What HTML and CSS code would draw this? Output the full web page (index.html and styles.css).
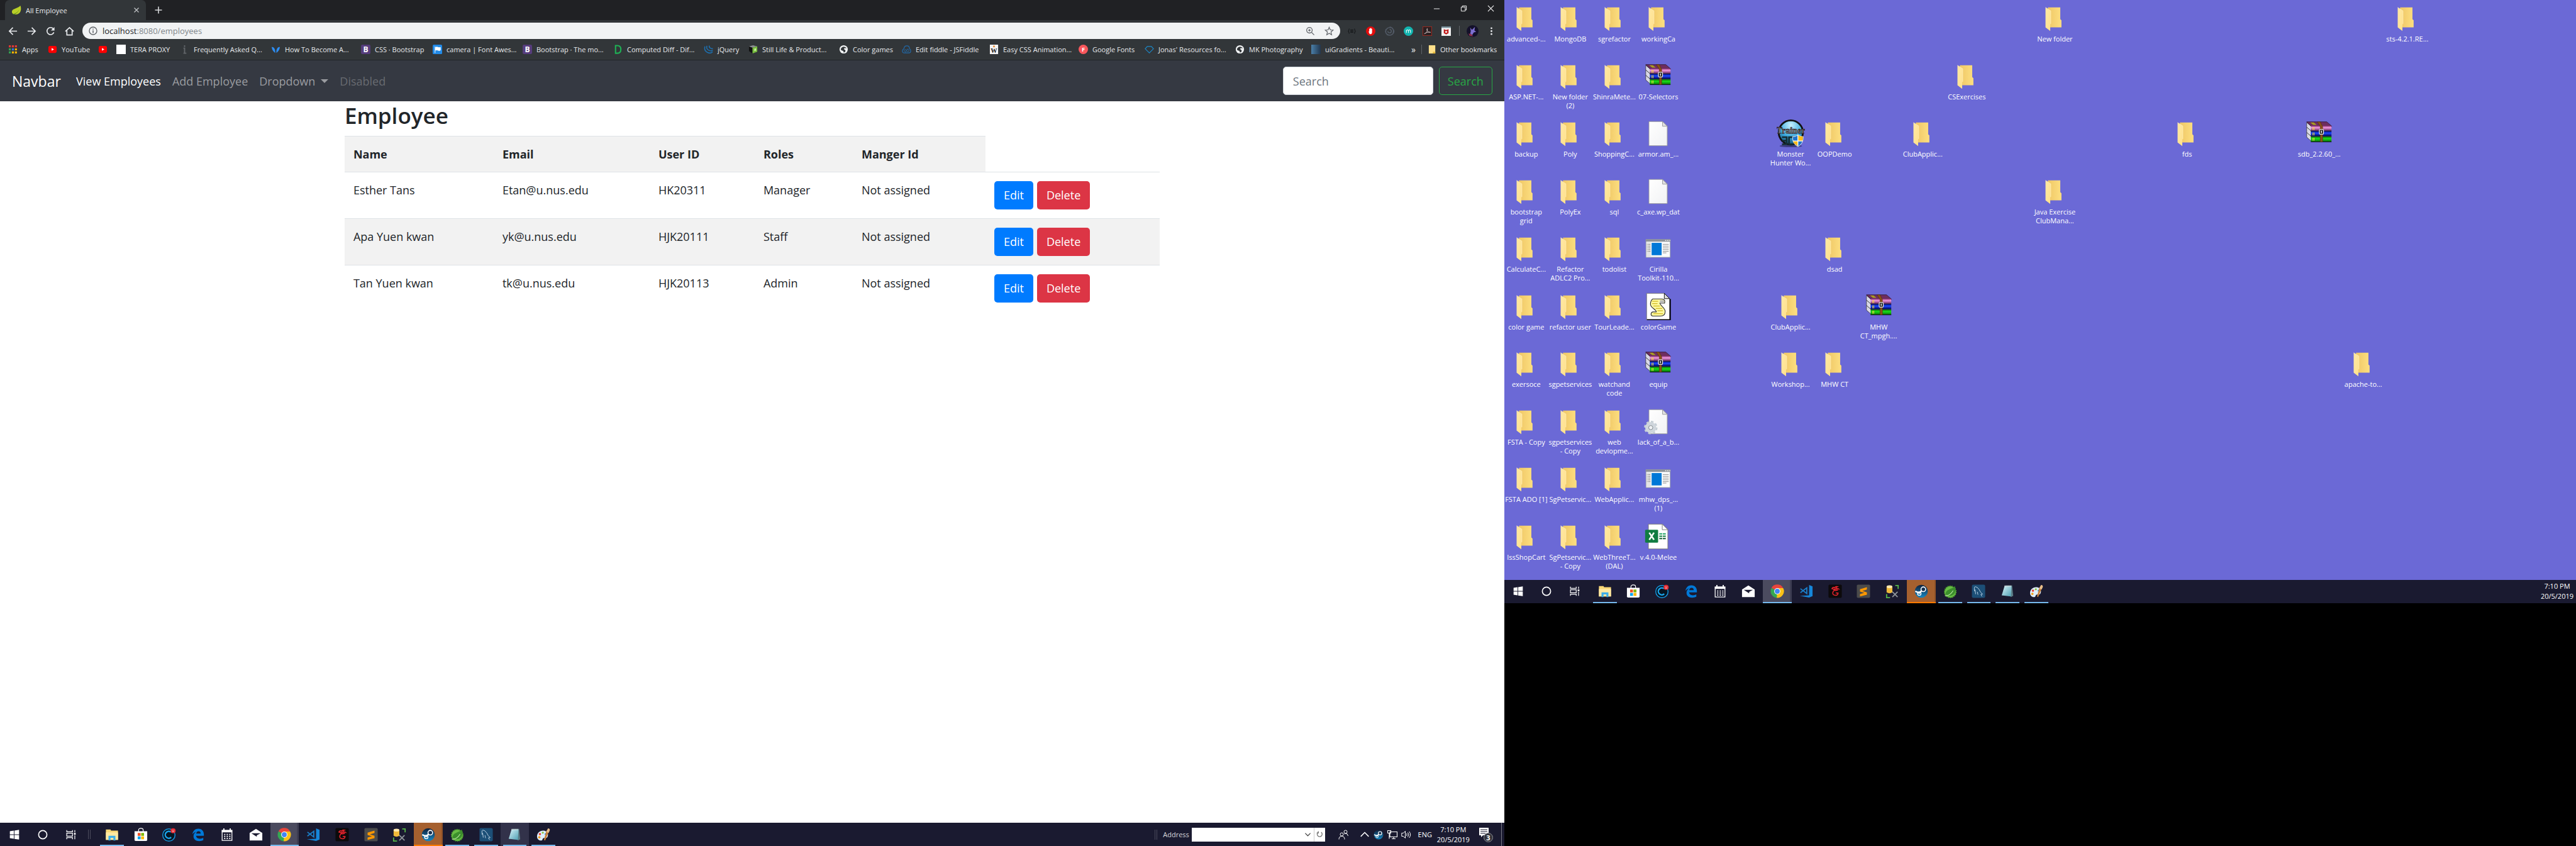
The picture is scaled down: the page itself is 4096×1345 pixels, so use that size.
FILE: index.html
```html
<!DOCTYPE html>
<html lang="en">
<head>
<meta charset="utf-8">
<title>All Employee</title>
<link rel="stylesheet" href="styles.css">
</head>
<body>
<svg class="sprite" width="0" height="0" aria-hidden="true">
  <defs>
    <linearGradient id="gFlap" x1="0" y1="0" x2="1" y2="1"><stop offset="0" stop-color="#ffe9a6"/><stop offset="1" stop-color="#ffe08a"/></linearGradient>
    <linearGradient id="gBack" x1="0" y1="0" x2="1" y2="0"><stop offset="0" stop-color="#efc766"/><stop offset="1" stop-color="#fddf80"/></linearGradient>
    <linearGradient id="gPink" x1="0" y1="0" x2="0" y2="1"><stop offset="0" stop-color="#a0408c"/><stop offset=".35" stop-color="#f09be0"/><stop offset="1" stop-color="#6d2560"/></linearGradient>
    <linearGradient id="gBlue" x1="0" y1="0" x2="0" y2="1"><stop offset="0" stop-color="#000c8c"/><stop offset=".4" stop-color="#1c48ff"/><stop offset="1" stop-color="#000a60"/></linearGradient>
    <linearGradient id="gGreen" x1="0" y1="0" x2="0" y2="1"><stop offset="0" stop-color="#0a7d0a"/><stop offset=".4" stop-color="#19dd19"/><stop offset="1" stop-color="#066006"/></linearGradient>
    <linearGradient id="gPage" x1="0" y1="0" x2="1" y2="1"><stop offset="0" stop-color="#ffffff"/><stop offset="1" stop-color="#f1f2f4"/></linearGradient>
    <radialGradient id="gOrb" cx=".5" cy=".2" r=".8"><stop offset="0" stop-color="#c8f1ff"/><stop offset=".6" stop-color="#3aa9dd"/><stop offset="1" stop-color="#125079"/></radialGradient>
    <linearGradient id="gSteam" x1="0" y1="0" x2="0" y2="1"><stop offset="0" stop-color="#10203a"/><stop offset="1" stop-color="#1789c4"/></linearGradient>
    <linearGradient id="gNote" x1="0" y1="0" x2="1" y2="1"><stop offset="0" stop-color="#d6f3f8"/><stop offset="1" stop-color="#4fa0b4"/></linearGradient>
    <linearGradient id="gUi" x1="0" y1="0" x2="1" y2="0"><stop offset="0" stop-color="#4a7fa8"/><stop offset="1" stop-color="#22374f"/></linearGradient>
  </defs>

  <symbol id="folder" viewBox="0 0 48 48">
    <path d="M12 6h21v20l2 2v12H12z" fill="url(#gBack)"/>
    <path d="M8 6l9 6v22l-1 1v11l-8-6z" fill="url(#gFlap)"/>
    <path d="M8 6l9 6v22" fill="none" stroke="#fff3c8" stroke-width=".6"/>
  </symbol>
  <symbol id="rar" viewBox="0 0 48 48">
    <path d="M3 6l8 7v25l-8-7z" fill="#d9d9e6" stroke="#333" stroke-width=".8"/>
    <path d="M3 14l8 7M3 23l8 7" stroke="#333" stroke-width="1"/>
    <path d="M3 5h34l8 7v1H11z" fill="#6e2d5f" stroke="#2b1326" stroke-width=".8"/>
    <path d="M9 6h6l5 4h-6z" fill="#a8a020"/>
    <rect x="10" y="12" width="35" height="8" fill="url(#gPink)"/>
    <rect x="10" y="21" width="35" height="8" fill="url(#gBlue)"/>
    <rect x="10" y="30" width="35" height="9" fill="url(#gGreen)"/>
    <path d="M10 20.500h35M10 29.500h35M10 39h35" stroke="#101018"/>
    <path d="M13.500 14v5M15.500 14v5M13.500 23v5M15.500 23v5M13.500 32v5M15.500 32v5" stroke="#ffe33a"/>
    <path d="M21 5h5l4 8v26h-4V13z" fill="#8a5118" stroke="#4f2c08" stroke-width=".6"/>
    <rect x="24.500" y="18" width="7" height="8" rx="1.500" fill="#222" stroke="#e0e0e0" stroke-width="1.400"/>
    <path d="M28 20v4" stroke="#fff" stroke-width="1.400"/>
  </symbol>
  <symbol id="page" viewBox="0 0 48 48">
    <path d="M8.500 4.500h23l8 8v33h-31z" fill="url(#gPage)" stroke="#9a9a9a"/>
    <path d="M31.500 4.500v8h8z" fill="#e3e3e3" stroke="#9a9a9a"/>
  </symbol>
  <symbol id="app" viewBox="0 0 48 48">
    <rect x="3.500" y="9.500" width="41" height="30" fill="#fbfbfb" stroke="#9aa0a8"/>
    <path d="M3 9h42v4H3z" fill="#8d9299"/>
    <path d="M36 11h2M39.500 11h2M43 11h1.500" stroke="#fff" stroke-width="1.400"/>
    <path d="M4 13h8v26H4z" fill="#e4e4e4"/>
    <path d="M5 17.500h1M7 17.500h4M5 20.500h1M7 20.500h4M5 23.500h1M7 23.500h4M5 26.500h1M7 26.500h4M5 29.500h1M7 29.500h4M32 17.500h10M32 20.500h10M32 23.500h10M32 26.500h10M32 29.500h10M32 32h6" stroke="#8a8a8a"/>
    <path d="M13 15h17v21H13z" fill="#0078d7"/>
  </symbol>
  <symbol id="script" viewBox="0 0 48 48">
    <path d="M4.500 2.500h30l9 9v36h-39z" fill="#fff" stroke="#777"/>
    <path d="M5 47.500h39.500V12" fill="none" stroke="#000" stroke-width="2"/>
    <path d="M34.500 2.500v9h9z" fill="#ddd" stroke="#000"/>
    <path d="M15 12h15c5 0 6 3 5 7h-8c0 4 9 8 9 14 0 5-3 8-8 8H15c-4 0-4-6 0-7h6c0-4-10-7-10-13 0-4 1-7 4-9z" fill="#fdf9a0" stroke="#333" stroke-width="1.200"/>
    <path d="M27 14h7v5h-7z" fill="#bbb"/>
    <path d="M14 16h10M14 20h9M16 24h11M20 28h11M23 32h9M16 37h16" stroke="#c5a800" stroke-width="1.200"/>
  </symbol>
  <symbol id="gear" viewBox="0 0 48 48">
    <use href="#page"/>
    <circle cx="11.500" cy="35" r="9.500" fill="none" stroke="#c3cdd4" stroke-width="4" stroke-dasharray="4 3.460"/>
    <circle cx="11.500" cy="35" r="6.500" fill="none" stroke="#cfd6dc" stroke-width="6"/>
    <circle cx="11.500" cy="35" r="3.500" fill="#f0f2f4" stroke="#7d858c"/>
  </symbol>
  <symbol id="xls" viewBox="0 0 48 48">
    <path d="M7.500 3.500h24l9 9v33h-33z" fill="#fff" stroke="#777"/>
    <path d="M31 3.500v9.500h9.500z" fill="#fff" stroke="#777"/>
    <path d="M26 20h5M32 20h5" stroke="#21a366" stroke-width="2"/>
    <path d="M26 24h5M32 24h5" stroke="#107c41" stroke-width="2"/>
    <path d="M26 28h5M32 28h5" stroke="#185c37" stroke-width="2"/>
    <rect x="2" y="13" width="22" height="22" rx="1.500" fill="#107c41"/>
    <path d="M9 18l8 12M17 18l-8 12" stroke="#fff" stroke-width="2.800"/>
  </symbol>
  <symbol id="trainer" viewBox="0 0 48 48">
    <ellipse cx="24" cy="46" rx="19" ry="2" fill="#3f3d85"/>
    <circle cx="24" cy="23" r="20.500" fill="url(#gOrb)" stroke="#111" stroke-width="3"/>
    <text x="24" y="25" text-anchor="middle" class="ico-cond" font-size="15" fill="#8f8f93" stroke="#33201c" stroke-width=".8">Trainer</text>
    <path d="M9 31h8v12H9M9 37h8M29 31h-8v12h8" fill="none" stroke="#152e35" stroke-width="3"/>
    <path d="M27 30c4 0 7-1 9-3 3 2 6 3 9 3 0 8-2 13-9 17-7-4-9-9-9-17z" fill="#1f74c9" stroke="#eee"/>
    <path d="M36 27.500c3 2 5 2.500 8.500 2.500 0 3 0 5-1 7.500H36zM27.700 37.500H36V46c-5-3-7-5-8.300-8.500z" fill="#fbbc1c"/>
    <path d="M36 27v19M27.500 37.500H44" stroke="#fff" stroke-width="1.400"/>
  </symbol>

  <symbol id="t-win" viewBox="0 0 24 24"><path d="M4 6l7-1v6.500H4zM12 4.800L20 3.500v8h-8zM4 12.500h7V19l-7-1zM12 12.500h8v8l-8-1.200z" fill="#fff"/></symbol>
  <symbol id="t-circle" viewBox="0 0 24 24"><circle cx="12" cy="12" r="7.200" fill="none" stroke="#fff" stroke-width="1.800"/></symbol>
  <symbol id="t-view" viewBox="0 0 24 24"><path d="M4.500 4v3h10V4M4.500 20v-3h10v3M4.500 9.500h10v5h-10zM18.500 4v4M18.500 13v7" fill="none" stroke="#fff" stroke-width="1.300"/><path d="M17 9h3v3h-3z" fill="#fff"/></symbol>
  <symbol id="t-files" viewBox="0 0 24 24"><path d="M1.500 3h8l1 2h12v16h-21z" fill="#f8d775"/><path d="M1.500 8h21v13h-21z" fill="#ffe9a2"/><path d="M6 22v-8h12v8h-3.500v-4.500h-5V22z" fill="#3daee9"/></symbol>
  <symbol id="t-store" viewBox="0 0 24 24"><path d="M8 7V4q0-3 4-3t4 3v3" fill="none" stroke="#fff" stroke-width="1.300"/><path d="M1 6h22v15q0 2-2 2H3q-2 0-2-2z" fill="#fff"/><path d="M6.500 9h5v5h-5z" fill="#f25022"/><path d="M12.500 9h5v5h-5z" fill="#7fba00"/><path d="M6.500 15h5v5h-5z" fill="#00a4ef"/><path d="M12.500 15h5v5h-5z" fill="#ffb900"/></symbol>
  <symbol id="t-cc" viewBox="0 0 24 24"><circle cx="11.500" cy="12.500" r="10.700" fill="#061522" stroke="#1596dd" stroke-width="1.600"/><path d="M15 7.500A6 6 0 1 0 15.500 16.500" fill="none" stroke="#19a3ea" stroke-width="2.600"/><circle cx="18.800" cy="5.200" r="4.400" fill="#e3262e"/><path d="M16.800 4.300h1.400M19.400 4.300h1.400M17 7q1.800-1.400 3.600 0" stroke="#fff" fill="none" stroke-width=".9"/></symbol>
  <symbol id="t-edge" viewBox="0 0 24 24"><path d="M2 11.500C3 5 7 1.500 12.500 1.500c6 0 9.500 4.500 9.500 10V14H8.500c.3 3.500 3 5 6.500 5 2.300 0 4.300-.6 6-1.600v4.200c-2 1-4.500 1.600-7.200 1.600C8 23.200 4 20 4 14.800c0-3.300 1.700-6 4.600-7.600C5.800 7.800 3.400 9.200 2 11.500zm6.700-1.300h7.800c0-2.600-1.300-4.200-3.700-4.200-2.300 0-3.700 1.600-4.100 4.200z" fill="#0078d7"/></symbol>
  <symbol id="t-cal" viewBox="0 0 24 24"><path d="M3.500 4.500h17V22h-17z" fill="none" stroke="#fff" stroke-width="1.400"/><path d="M3 4h18v4H3zM5.500 1h2v4h-2zM16.500 1h2v4h-2z" fill="#fff"/><path d="M7 11.500h11M7 15h11M7 18.500h11" stroke="#fff" stroke-width="2" stroke-dasharray="2 2.400"/></symbol>
  <symbol id="t-mail" viewBox="0 0 24 24"><path d="M1 9L12 2l11 7v13H1z" fill="#fff"/><path d="M4 9.500h16L13.500 13l-.2 2.500z" fill="#1a1a30"/></symbol>
  <symbol id="t-chrome" viewBox="0 0 24 24"><path d="M12 12L2 6.200A11.500 11.500 0 0 1 22 6.200z" fill="#e8453c"/><path d="M12 12L2 6.200A11.500 11.500 0 0 0 11 23.400L17 15z" fill="#34a853"/><path d="M12 12l-1 11.400A11.500 11.500 0 0 0 22.200 6.600L12 6.500z" fill="#fbc116"/><circle cx="12" cy="12" r="5.400" fill="#fff"/><circle cx="12" cy="12" r="4.300" fill="#4285f4"/></symbol>
  <symbol id="t-code" viewBox="0 0 24 24"><path d="M17 1l6 2.500v17L17 23 1 20l16-1z" fill="#1686d9"/><path d="M2 7.500l11 8.500V6L2 14.500" fill="none" stroke="#1b7fc9" stroke-width="2"/></symbol>
  <symbol id="t-garena" viewBox="0 0 24 24"><rect x=".5" y=".5" width="23" height="23" rx="2" fill="#0c0a0b"/><path d="M6 8q2-4 5-2 2-3 5-2-3 1-2 3 3 0 4 1-5-1-8 1-3-2-4-1zM17 10q-8-1-9 4t5 5q4 0 4-4h-4M10 10q4 1 5 0" fill="none" stroke="#e5232c" stroke-width="1.700"/></symbol>
  <symbol id="t-sub" viewBox="0 0 24 24"><rect x=".5" y=".5" width="23" height="23" rx="2" fill="#4b4b4b"/><path d="M18 5v4l-8 2.500 8 2.500v4L6 21v-4l7.500-2.300L6 12.500v-4z" fill="#ff9800"/></symbol>
  <symbol id="t-tools" viewBox="0 0 24 24"><path d="M2 4v10q5 3 10 0V4z" fill="#f0b93a"/><ellipse cx="7" cy="4" rx="5" ry="2.500" fill="#ffe9b0"/><path d="M17 2h5v6M2 17v6h6" fill="none" stroke="#56b648" stroke-width="2"/><path d="M12 13l9 9M21 13l-9 9" stroke="#8e949a" stroke-width="2"/></symbol>
  <symbol id="t-steam" viewBox="0 0 24 24"><circle cx="12" cy="12" r="11.300" fill="url(#gSteam)"/><path d="M1.500 12l7 3 4-4" fill="none" stroke="#fff" stroke-width="2.600"/><circle cx="8.500" cy="16" r="3" fill="none" stroke="#fff" stroke-width="1.500"/><circle cx="15.500" cy="8.500" r="4" fill="#16304f" stroke="#fff" stroke-width="1.700"/></symbol>
  <symbol id="t-leaf" viewBox="0 0 24 24"><circle cx="12" cy="13" r="10" fill="#68bd45" stroke="#4d9a30" stroke-width="2" stroke-dasharray="2 1.500"/><path d="M4 17C4 8 15 9 20 3c3 9 0 17-9 17-3 0-5-1-7-3z" fill="#3c8f2c"/><path d="M3 20q9 0 14-9" fill="none" stroke="#b9e6a0" stroke-width="1.200"/></symbol>
  <symbol id="t-dolphin" viewBox="0 0 24 24"><rect x=".5" y=".5" width="23" height="23" rx="2.500" fill="#1c4f77"/><path d="M5 12q-1-7 1-8 4 0 7 5 2 5 6 8l-3 .5 2 3.500M6 9l1 8M10 13l1 5" fill="none" stroke="#c3d9ea" stroke-width="1"/></symbol>
  <symbol id="t-note" viewBox="0 0 24 24"><path d="M8 2h12l2 18-4 2z" fill="#5b7d86"/><path d="M7 3h12l-1 18-16-2z" fill="url(#gNote)"/><path d="M7 3h12" stroke="#e8e8e8" stroke-width="2" stroke-dasharray="1 1"/></symbol>
  <symbol id="t-paint" viewBox="0 0 24 24"><path d="M12 5C5 5 1 10 1 15s4 8 8 7c2-.5 1-3 3-4s5 1 7-2c3-5-1-11-7-11z" fill="#dfeefb"/><circle cx="6" cy="11" r="2" fill="#e94235"/><circle cx="11" cy="8.500" r="1.800" fill="#8ac53e"/><circle cx="16" cy="11" r="1.800" fill="#2c8be0"/><circle cx="5" cy="16.500" r="2" fill="#f6a11c"/><path d="M21 3q2 2 0 5l-6 14-2-1 4-15q1-3 4-3z" fill="#c9803b"/><path d="M20 1q4 0 3 4l-2 4-4-2z" fill="#e6bd8a"/></symbol>
  <symbol id="b-yt" viewBox="0 0 16 16"><rect x="1" y="2" width="14" height="12" rx="3" fill="#f00"/><path d="M6.500 5.500v5l4-2.500z" fill="#fff"/></symbol>
  <symbol id="b-boot" viewBox="0 0 16 16"><rect width="16" height="16" rx="2.500" fill="#563d7c"/><text x="8" y="12.500" text-anchor="middle" class="ico-bold" font-size="13" fill="#fff">B</text></symbol>
  <symbol id="b-globe" viewBox="0 0 16 16"><circle cx="8" cy="8" r="7" fill="#f1f3f4"/><path d="M8 3.500c2 0 4 1 5 2.500-2 0-4-.5-4.500 1s2 1 2.500 3-2 3-3 3.500c0-2-.5-3.500-2.500-3.500S3 8 3 7.500C4 5 6 3.500 8 3.500z" fill="#323639"/></symbol>
</svg>

<main class="screens">
  <section class="screen primary" aria-label="Browser screen">
    <div class="browser">
      <div class="tabstrip">
        <div class="tab">
          <svg class="i16" viewBox="0 0 16 16"><path d="M1 12C0 5 8 7 14.500 1 17 8 14 15 7 15c-2.500 0-4 0-6-3z" fill="#b9cf28"/><path d="M1.500 14.500Q9 14 13 6.500 10 13 4 15.500z" fill="#4b7a1e"/></svg>
          <span class="tab-title">All Employee</span>
          <button class="tab-close" aria-label="Close tab"><svg viewBox="0 0 10 10"><path d="M1.500 1.500l7 7M8.500 1.500l-7 7" stroke="#c4c7ca" stroke-width="1.200"/></svg></button>
        </div>
        <button class="new-tab" aria-label="New tab"><svg viewBox="0 0 12 12"><path d="M6 .5v11M.5 6h11" stroke="#d5d7da" stroke-width="1.600"/></svg></button>
        <div class="win-buttons">
          <button aria-label="Minimise"><svg viewBox="0 0 12 12"><path d="M1 6.500h10" stroke="#fff"/></svg></button>
          <button aria-label="Restore"><svg viewBox="0 0 12 12"><path d="M1.500 3.500h7v7h-7zM3.500 3.500v-2h7v7h-2" fill="none" stroke="#fff"/></svg></button>
          <button aria-label="Close"><svg viewBox="0 0 12 12"><path d="M1 1l10 10M11 1L1 11" stroke="#fff" stroke-width="1.100"/></svg></button>
        </div>
      </div>

      <div class="toolbar">
        <button class="tool" aria-label="Back"><svg viewBox="0 0 16 16"><path d="M15 8H2M8 2L2 8l6 6" fill="none" stroke="#e8eaed" stroke-width="1.800"/></svg></button>
        <button class="tool" aria-label="Forward"><svg viewBox="0 0 16 16"><path d="M1 8h13M8 2l6 6-6 6" fill="none" stroke="#e8eaed" stroke-width="1.800"/></svg></button>
        <button class="tool" aria-label="Reload"><svg viewBox="0 0 16 16"><path d="M13.500 10A6 6 0 1 1 12.500 4" fill="none" stroke="#e8eaed" stroke-width="1.800"/><path d="M14.500 1v6h-6z" fill="#e8eaed"/></svg></button>
        <button class="tool" aria-label="Home"><svg viewBox="0 0 16 16"><path d="M1 8.500L8 2l7 6.500M3.500 7v7.500h9V7" fill="none" stroke="#e8eaed" stroke-width="1.800"/></svg></button>
        <div class="omnibox">
          <svg class="info" viewBox="0 0 14 14"><circle cx="7" cy="7" r="6" fill="none" stroke="#5f6368" stroke-width="1.400"/><path d="M7 6.200V10.500M7 3.500v1.400" stroke="#5f6368" stroke-width="1.500"/></svg>
          <div class="url" role="textbox" aria-label="Address and search bar">localhost<span>:8080/employees</span></div>
          <button class="tool" aria-label="Zoom"><svg viewBox="0 0 16 16"><circle cx="6.500" cy="6.500" r="4.700" fill="none" stroke="#5f6368" stroke-width="1.400"/><path d="M10 10l4.500 4.500M4.500 6.500h4M6.500 4.500v4" stroke="#5f6368" stroke-width="1.400"/></svg></button>
          <button class="tool" aria-label="Bookmark"><svg viewBox="0 0 16 16"><path d="M8 1.500l1.900 4.400 4.700.4-3.600 3.100 1.100 4.700L8 11.600l-4.100 2.500L5 9.400 1.400 6.300l4.700-.4z" fill="none" stroke="#5f6368" stroke-width="1.300"/></svg></button>
        </div>
        <div class="extensions">
          <button class="tool" aria-label="JSON viewer"><svg viewBox="0 0 16 16"><path d="M4 4Q3 4 3 6T1.500 8Q3 8.500 3 10t1 2M12 4q1 0 1 2t1.500 2Q13 8.500 13 10t-1 2M5.500 6h5M5.500 8h5M5.500 10h5" fill="none" stroke="#151719" stroke-width="1.200"/></svg></button>
          <button class="tool" aria-label="Ad blocker"><svg viewBox="0 0 16 16"><circle cx="8" cy="8" r="8" fill="#e40d0d"/><path d="M4.500 8l1 .5V4h1.200v3.500V3h1.200v4.500V3h1.200v4.500V4h1.200v6q0 3-3 3-2 0-2.800-5z" fill="#fff"/></svg></button>
          <button class="tool" aria-label="Swirl"><svg viewBox="0 0 16 16"><path d="M8 1a7 7 0 0 1 6 10M15 6a7 7 0 0 1-9 8.500M7 15A7 7 0 0 1 2 5M1.500 9A7 7 0 0 1 10 2M8 5a3 3 0 1 1-3 3" fill="none" stroke="#525a66" stroke-width="1.700"/></svg></button>
          <button class="tool" aria-label="Momentum"><svg viewBox="0 0 16 16"><circle cx="8" cy="8" r="8" fill="#12b5b0"/><path d="M4.500 11V6M4.500 7.500Q6.200 4.500 8 7v4M8 7.500q1.800-3 3.500-.5v4" fill="none" stroke="#fff" stroke-width="1.100"/></svg></button>
          <button class="tool" aria-label="PDF"><svg viewBox="0 0 16 16"><rect x=".5" y=".5" width="15" height="15" fill="#2b2022" stroke="#9c2b22"/><path d="M3 12.500c3-1 6-5 5-9-2 1 0 7 5.500 6.500C11 9 6 10 3 12.500z" fill="none" stroke="#c9bcbc"/></svg></button>
          <button class="tool" aria-label="Safe browsing"><svg viewBox="0 0 16 16"><path d="M0 0h16v16H0z" fill="#f3f3f3"/><path d="M0 0h16v2.500H0z" fill="#77909b"/><path d="M4 4.500l2.500 1.300h3L12 4.500v7L8 13.500l-4-2zM6.300 8v2L8 11l1.700-1V8z" fill="#c01818"/></svg></button>
        </div>
        <span class="divider"></span>
        <button class="tool" aria-label="Profile"><svg class="avatar" viewBox="0 0 20 20"><circle cx="10" cy="10" r="10" fill="#14112a"/><path d="M6 4l3 4 5-5-1 6 3 2-4 1-3 5-3-3 1-4z" fill="#7d6fd0"/><path d="M3 14l5 1 3 4-6-1z" fill="#8a2f4a"/></svg></button>
        <button class="tool" aria-label="Menu"><svg viewBox="0 0 16 16"><circle cx="8" cy="3" r="1.500" fill="#e8eaed"/><circle cx="8" cy="8" r="1.500" fill="#e8eaed"/><circle cx="8" cy="13" r="1.500" fill="#e8eaed"/></svg></button>
      </div>

      <nav class="bookmarks" aria-label="Bookmarks">
        <a href="#"><svg viewBox="0 0 14 14"><path d="M1 1h3v3H1zM5.500 1h3v3h-3zM10 1h3v3h-3z" fill="#e53935"/><path d="M1 5.500h3v3H1z" fill="#34a853"/><path d="M5.500 5.500h3v3h-3z" fill="#2f7de1"/><path d="M10 5.500h3v3h-3zM10 10h3v3h-3zM5.500 10h3v3h-3z" fill="#f4b400"/><path d="M1 10h3v3H1z" fill="#34a853"/></svg>Apps</a>
        <a href="#"><svg><use href="#b-yt"/></svg>YouTube</a>
        <a href="#" aria-label="YouTube"><svg><use href="#b-yt"/></svg></a>
        <a href="#"><svg viewBox="0 0 16 16"><path d="M0 0h16v16H0z" fill="#fff"/></svg>TERA PROXY</a>
        <a href="#"><svg viewBox="0 0 16 16"><path d="M8 1v3M6 6h2v8M6 14.500h5" stroke="#62666a" stroke-width="2" fill="none"/></svg>Frequently Asked Q...</a>
        <a href="#"><svg viewBox="0 0 16 16"><path d="M1 4q5-1 6 7v3Q2 11 1 4zM15 4q-5-1-6 7v3q5-3 6-10z" fill="#2d8cf0"/></svg>How To Become A...</a>
        <a href="#"><svg><use href="#b-boot"/></svg>CSS · Bootstrap</a>
        <a href="#"><svg viewBox="0 0 16 16"><rect width="16" height="16" rx="2" fill="#228ae6"/><path d="M4 3v11M5 4.500q2-1 4 0t4 0v5q-2 1-4 0t-4 0z" fill="#fff" stroke="#fff"/></svg>camera | Font Awes...</a>
        <a href="#"><svg><use href="#b-boot"/></svg>Bootstrap · The mo...</a>
        <a href="#"><svg viewBox="0 0 16 16"><path d="M4 1.500h3q6 0 6 6.500t-6 6.500H4z" fill="none" stroke="#1fb155" stroke-width="2.200"/></svg>Computed Diff - Dif...</a>
        <a href="#"><svg viewBox="0 0 16 16"><path d="M2 3q-2 7 4 10t9-1M5.500 2q-2 5 3 7.500t6.500-.5M9.500 1.500q-1 3 2 4.500t3.500 0" fill="none" stroke="#1d6fae" stroke-width="1.700"/></svg>jQuery</a>
        <a href="#"><svg viewBox="0 0 16 16"><path d="M1 3l6 2v10l-6-4z" fill="#111"/><path d="M1 3l7-2 7 2-8 2z" fill="#8b8f92"/><path d="M7 5l8-2v9l-8 3z" fill="#78bd3f"/><path d="M10 7l3-1v4l-3 1z" fill="#c9efa4"/></svg>Still Life &amp; Product...</a>
        <a href="#"><svg><use href="#b-globe"/></svg>Color games</a>
        <a href="#"><svg viewBox="0 0 16 16"><path d="M4 14q-3 0-3-3.500Q1 8 3.500 7 4 2 8.500 2T13 7q2 1 2 3.500Q15 14 12 14z" fill="none" stroke="#2169a8" stroke-width="1.300"/><path d="M8 10q-2-2.500-3.500-1.200T5 12t3-2 3-2 .5 3.500T8 10z" fill="none" stroke="#2169a8"/></svg>Edit fiddle - JSFiddle</a>
        <a href="#"><svg viewBox="0 0 16 16"><path d="M1 0h14v16H1z" fill="#f4f4f4"/><circle cx="8" cy="3" r="1.600" fill="#f08a2c"/><text x="8" y="14" text-anchor="middle" class="ico-serif" font-size="11" fill="#222">W</text></svg>Easy CSS Animation...</a>
        <a href="#"><svg viewBox="0 0 16 16"><circle cx="8" cy="8" r="8" fill="#f9575c"/><text x="8" y="12" text-anchor="middle" class="ico-bold" font-size="10" fill="#fff">F</text></svg>Google Fonts</a>
        <a href="#"><svg viewBox="0 0 16 16"><path d="M4.500 3h7L15 7l-7 7-7-7z" fill="none" stroke="#1c86c4" stroke-width="1.300"/></svg>Jonas' Resources fo...</a>
        <a href="#"><svg><use href="#b-globe"/></svg>MK Photography</a>
        <a href="#"><svg viewBox="0 0 16 16"><path d="M0 0h16v16H0z" fill="url(#gUi)"/></svg>uiGradients - Beauti...</a>
        <button class="more" aria-label="More bookmarks">»</button>
        <a class="other" href="#"><svg viewBox="0 0 16 16"><path d="M2 1h11v14H2z" fill="#ffe08a"/><path d="M9 15V12h4v3z" fill="#e9bb3c"/></svg>Other bookmarks</a>
      </nav>
    </div>

    <div class="page">
      <header class="navbar">
        <a class="brand" href="#">Navbar</a>
        <nav class="links" aria-label="Main">
          <a class="active" href="#">View Employees</a>
          <a href="#">Add Employee</a>
          <a class="drop" href="#">Dropdown</a>
          <a class="disabled" href="#" aria-disabled="true">Disabled</a>
        </nav>
        <form class="search">
          <input type="search" placeholder="Search" aria-label="Search">
          <button type="button">Search</button>
        </form>
      </header>

      <div class="container">
        <h2>Employee</h2>
        <table>
          <colgroup><col class="c-name"><col class="c-mail"><col class="c-id"><col class="c-role"><col class="c-mgr"><col></colgroup>
          <thead>
            <tr><th>Name</th><th>Email</th><th>User ID</th><th>Roles</th><th>Manger Id</th><td></td></tr>
          </thead>
          <tbody>
            <tr><td>Esther Tans</td><td>Etan@u.nus.edu</td><td>HK20311</td><td>Manager</td><td>Not assigned</td><td class="acts"><div><button class="btn edit">Edit</button><button class="btn delete">Delete</button></div></td></tr>
            <tr><td>Apa Yuen kwan</td><td>yk@u.nus.edu</td><td>HJK20111</td><td>Staff</td><td>Not assigned</td><td class="acts"><div><button class="btn edit">Edit</button><button class="btn delete">Delete</button></div></td></tr>
            <tr><td>Tan Yuen kwan</td><td>tk@u.nus.edu</td><td>HJK20113</td><td>Admin</td><td>Not assigned</td><td class="acts"><div><button class="btn edit">Edit</button><button class="btn delete">Delete</button></div></td></tr>
          </tbody>
        </table>
      </div>
    </div>

    <footer class="taskbar">
      <div class="system">
        <button aria-label="Start"><svg><use href="#t-win"/></svg></button>
        <button aria-label="Cortana"><svg><use href="#t-circle"/></svg></button>
        <button aria-label="Task view"><svg><use href="#t-view"/></svg></button>
      </div>
      <span class="grip"></span>
      <div class="apps">
        <button class="open" aria-label="File Explorer"><svg><use href="#t-files"/></svg></button>
        <button aria-label="Store"><svg><use href="#t-store"/></svg></button>
        <button aria-label="CCleaner"><svg><use href="#t-cc"/></svg></button>
        <button aria-label="Edge"><svg><use href="#t-edge"/></svg></button>
        <button aria-label="Calendar"><svg><use href="#t-cal"/></svg></button>
        <button aria-label="Mail"><svg><use href="#t-mail"/></svg></button>
        <button class="current" aria-label="Chrome"><svg><use href="#t-chrome"/></svg></button>
        <button aria-label="Visual Studio Code"><svg><use href="#t-code"/></svg></button>
        <button aria-label="Garena"><svg><use href="#t-garena"/></svg></button>
        <button aria-label="Sublime Text"><svg><use href="#t-sub"/></svg></button>
        <button aria-label="SQL tools"><svg><use href="#t-tools"/></svg></button>
        <button class="alert" aria-label="Steam"><svg><use href="#t-steam"/></svg></button>
        <button class="open" aria-label="Spring Tool Suite"><svg><use href="#t-leaf"/></svg></button>
        <button class="open" aria-label="MySQL Workbench"><svg><use href="#t-dolphin"/></svg></button>
        <button class="open hover" aria-label="Notepad"><svg><use href="#t-note"/></svg></button>
        <button class="open" aria-label="Paint"><svg><use href="#t-paint"/></svg></button>
      </div>
      <div class="tray">
        <span class="grip"></span>
        <label for="address">Address</label>
        <div class="address">
          <input id="address" type="text">
          <button aria-label="Show addresses"><svg viewBox="0 0 12 12"><path d="M1.500 4L6 8.500 10.500 4" fill="none" stroke="#444" stroke-width="1.300"/></svg></button>
          <button class="go" aria-label="Refresh"><svg viewBox="0 0 12 12"><path d="M3 2.500A4.300 4.300 0 1 0 8.500 2.300M3.500.5v3H.8" fill="none" stroke="#777" stroke-width="1.500"/></svg></button>
        </div>
        <button class="people" aria-label="People"><svg viewBox="0 0 16 16"><circle cx="5.500" cy="7.500" r="2.500" fill="none" stroke="#fff"/><path d="M1 15.500q0-5 4.500-5t4.500 5M9.500 7q1-1 2-1 3.500 0 4 4" fill="none" stroke="#fff"/><circle cx="11.500" cy="3.500" r="2.500" fill="none" stroke="#fff"/></svg></button>
        <button aria-label="Hidden icons"><svg viewBox="0 0 14 14"><path d="M1.500 9.500L7 4l5.500 5.500" fill="none" stroke="#fff" stroke-width="1.300"/></svg></button>
        <button aria-label="Steam"><svg><use href="#t-steam"/></svg></button>
        <button aria-label="Network"><svg viewBox="0 0 16 16"><path d="M4 3.500h11.500v8H4zM7 14.500h6M10 11.500v3M.5 1.500h5v4h-5zM3 5.500v9" fill="none" stroke="#fff" stroke-width="1.100"/></svg></button>
        <button aria-label="Volume"><svg viewBox="0 0 16 16"><path d="M.8 5.500h2.500L6.500 2.500v11l-3.200-3H.8zM8.500 6q1.500 2 0 4M10.500 4.500q3 3.500 0 7M12.700 3q4 5 0 10" fill="none" stroke="#fff" stroke-width="1"/></svg></button>
        <button class="lang">ENG</button>
        <div class="clock">7:10 PM<br>20/5/2019</div>
        <button class="notes" aria-label="Notifications"><svg viewBox="0 0 24 24"><path d="M2 1h15v12h-9l-3 3v-3H2z" fill="#fff"/><path d="M4 4h11M4 7h11M4 10h8" stroke="#1a1a30" stroke-width="1.200"/><circle cx="16.500" cy="16.500" r="7" fill="#33343c" stroke="#8c8d94"/><text x="16.500" y="20.500" text-anchor="middle" class="ico-bold" font-size="11" fill="#fff">3</text></svg></button>
      </div>
    </footer>
  </section>

  <section class="screen secondary" aria-label="Desktop screen">
    <div class="desktop">
      <figure style="--c:1;--r:1"><svg><use href="#folder"/></svg><figcaption>advanced-...</figcaption></figure>
      <figure style="--c:2;--r:1"><svg><use href="#folder"/></svg><figcaption>MongoDB</figcaption></figure>
      <figure style="--c:3;--r:1"><svg><use href="#folder"/></svg><figcaption>sgrefactor</figcaption></figure>
      <figure style="--c:4;--r:1"><svg><use href="#folder"/></svg><figcaption>workingCa</figcaption></figure>
      <figure style="--c:13;--r:1"><svg><use href="#folder"/></svg><figcaption>New folder</figcaption></figure>
      <figure style="--c:21;--r:1"><svg><use href="#folder"/></svg><figcaption>sts-4.2.1.RE...</figcaption></figure>

      <figure style="--c:1;--r:2"><svg><use href="#folder"/></svg><figcaption>ASP.NET-...</figcaption></figure>
      <figure style="--c:2;--r:2"><svg><use href="#folder"/></svg><figcaption>New folder<br>(2)</figcaption></figure>
      <figure style="--c:3;--r:2"><svg><use href="#folder"/></svg><figcaption>ShinraMete...</figcaption></figure>
      <figure style="--c:4;--r:2"><svg><use href="#rar"/></svg><figcaption>07-Selectors</figcaption></figure>
      <figure style="--c:11;--r:2"><svg><use href="#folder"/></svg><figcaption>CSExercises</figcaption></figure>

      <figure style="--c:1;--r:3"><svg><use href="#folder"/></svg><figcaption>backup</figcaption></figure>
      <figure style="--c:2;--r:3"><svg><use href="#folder"/></svg><figcaption>Poly</figcaption></figure>
      <figure style="--c:3;--r:3"><svg><use href="#folder"/></svg><figcaption>ShoppingC...</figcaption></figure>
      <figure style="--c:4;--r:3"><svg><use href="#page"/></svg><figcaption>armor.am_...</figcaption></figure>
      <figure style="--c:7;--r:3"><svg><use href="#trainer"/></svg><figcaption>Monster<br>Hunter Wo...</figcaption></figure>
      <figure style="--c:8;--r:3"><svg><use href="#folder"/></svg><figcaption>OOPDemo</figcaption></figure>
      <figure style="--c:10;--r:3"><svg><use href="#folder"/></svg><figcaption>ClubApplic...</figcaption></figure>
      <figure style="--c:16;--r:3"><svg><use href="#folder"/></svg><figcaption>fds</figcaption></figure>
      <figure style="--c:19;--r:3"><svg><use href="#rar"/></svg><figcaption>sdb_2.2.60_...</figcaption></figure>

      <figure style="--c:1;--r:4"><svg><use href="#folder"/></svg><figcaption>bootstrap<br>grid</figcaption></figure>
      <figure style="--c:2;--r:4"><svg><use href="#folder"/></svg><figcaption>PolyEx</figcaption></figure>
      <figure style="--c:3;--r:4"><svg><use href="#folder"/></svg><figcaption>sql</figcaption></figure>
      <figure style="--c:4;--r:4"><svg><use href="#page"/></svg><figcaption>c_axe.wp_dat</figcaption></figure>
      <figure style="--c:13;--r:4"><svg><use href="#folder"/></svg><figcaption>Java Exercise<br>ClubMana...</figcaption></figure>

      <figure style="--c:1;--r:5"><svg><use href="#folder"/></svg><figcaption>CalculateC...</figcaption></figure>
      <figure style="--c:2;--r:5"><svg><use href="#folder"/></svg><figcaption>Refactor<br>ADLC2 Pro...</figcaption></figure>
      <figure style="--c:3;--r:5"><svg><use href="#folder"/></svg><figcaption>todolist</figcaption></figure>
      <figure style="--c:4;--r:5"><svg><use href="#app"/></svg><figcaption>Cirilla<br>Toolkit-110...</figcaption></figure>
      <figure style="--c:8;--r:5"><svg><use href="#folder"/></svg><figcaption>dsad</figcaption></figure>

      <figure style="--c:1;--r:6"><svg><use href="#folder"/></svg><figcaption>color game</figcaption></figure>
      <figure style="--c:2;--r:6"><svg><use href="#folder"/></svg><figcaption>refactor user</figcaption></figure>
      <figure style="--c:3;--r:6"><svg><use href="#folder"/></svg><figcaption>TourLeade...</figcaption></figure>
      <figure style="--c:4;--r:6"><svg><use href="#script"/></svg><figcaption>colorGame</figcaption></figure>
      <figure style="--c:7;--r:6"><svg><use href="#folder"/></svg><figcaption>ClubApplic...</figcaption></figure>
      <figure style="--c:9;--r:6"><svg><use href="#rar"/></svg><figcaption>MHW<br>CT_mpgh....</figcaption></figure>

      <figure style="--c:1;--r:7"><svg><use href="#folder"/></svg><figcaption>exersoce</figcaption></figure>
      <figure style="--c:2;--r:7"><svg><use href="#folder"/></svg><figcaption>sgpetservices</figcaption></figure>
      <figure style="--c:3;--r:7"><svg><use href="#folder"/></svg><figcaption>watchand<br>code</figcaption></figure>
      <figure style="--c:4;--r:7"><svg><use href="#rar"/></svg><figcaption>equip</figcaption></figure>
      <figure style="--c:7;--r:7"><svg><use href="#folder"/></svg><figcaption>Workshop...</figcaption></figure>
      <figure style="--c:8;--r:7"><svg><use href="#folder"/></svg><figcaption>MHW CT</figcaption></figure>
      <figure style="--c:20;--r:7"><svg><use href="#folder"/></svg><figcaption>apache-to...</figcaption></figure>

      <figure style="--c:1;--r:8"><svg><use href="#folder"/></svg><figcaption>FSTA - Copy</figcaption></figure>
      <figure style="--c:2;--r:8"><svg><use href="#folder"/></svg><figcaption>sgpetservices<br>- Copy</figcaption></figure>
      <figure style="--c:3;--r:8"><svg><use href="#folder"/></svg><figcaption>web<br>devlopme...</figcaption></figure>
      <figure style="--c:4;--r:8"><svg><use href="#gear"/></svg><figcaption>lack_of_a_b...</figcaption></figure>

      <figure style="--c:1;--r:9"><svg><use href="#folder"/></svg><figcaption>FSTA ADO [1]</figcaption></figure>
      <figure style="--c:2;--r:9"><svg><use href="#folder"/></svg><figcaption>SgPetservic...</figcaption></figure>
      <figure style="--c:3;--r:9"><svg><use href="#folder"/></svg><figcaption>WebApplic...</figcaption></figure>
      <figure style="--c:4;--r:9"><svg><use href="#app"/></svg><figcaption>mhw_dps_...<br>(1)</figcaption></figure>

      <figure style="--c:1;--r:10"><svg><use href="#folder"/></svg><figcaption>IssShopCart</figcaption></figure>
      <figure style="--c:2;--r:10"><svg><use href="#folder"/></svg><figcaption>SgPetservic...<br>- Copy</figcaption></figure>
      <figure style="--c:3;--r:10"><svg><use href="#folder"/></svg><figcaption>WebThreeT...<br>(DAL)</figcaption></figure>
      <figure style="--c:4;--r:10"><svg><use href="#xls"/></svg><figcaption>v.4.0-Melee</figcaption></figure>
    </div>
    <footer class="taskbar">
      <div class="system">
        <button aria-label="Start"><svg><use href="#t-win"/></svg></button>
        <button aria-label="Cortana"><svg><use href="#t-circle"/></svg></button>
        <button aria-label="Task view"><svg><use href="#t-view"/></svg></button>
      </div>
      <div class="apps">
        <button class="open" aria-label="File Explorer"><svg><use href="#t-files"/></svg></button>
        <button aria-label="Store"><svg><use href="#t-store"/></svg></button>
        <button aria-label="CCleaner"><svg><use href="#t-cc"/></svg></button>
        <button aria-label="Edge"><svg><use href="#t-edge"/></svg></button>
        <button aria-label="Calendar"><svg><use href="#t-cal"/></svg></button>
        <button aria-label="Mail"><svg><use href="#t-mail"/></svg></button>
        <button class="current" aria-label="Chrome"><svg><use href="#t-chrome"/></svg></button>
        <button aria-label="Visual Studio Code"><svg><use href="#t-code"/></svg></button>
        <button aria-label="Garena"><svg><use href="#t-garena"/></svg></button>
        <button aria-label="Sublime Text"><svg><use href="#t-sub"/></svg></button>
        <button aria-label="SQL tools"><svg><use href="#t-tools"/></svg></button>
        <button class="alert" aria-label="Steam"><svg><use href="#t-steam"/></svg></button>
        <button class="open" aria-label="Spring Tool Suite"><svg><use href="#t-leaf"/></svg></button>
        <button class="open" aria-label="MySQL Workbench"><svg><use href="#t-dolphin"/></svg></button>
        <button class="open" aria-label="Notepad"><svg><use href="#t-note"/></svg></button>
        <button class="open" aria-label="Paint"><svg><use href="#t-paint"/></svg></button>
      </div>
      <div class="tray"><div class="clock">7:10 PM<br>20/5/2019</div></div>
    </footer>
  </section>
</main>
</body>
</html>
```

FILE: styles.css
```css
* { box-sizing: border-box; }

body {
  margin: 0;
  background: #000;
  font-family: "Open Sans", "Noto Sans", sans-serif;
  font-size: 11px;
  color: #212529;
}

button {
  margin: 0;
  padding: 0;
  border: 0;
  background: none;
  color: inherit;
  font: inherit;
}

a { color: inherit; text-decoration: none; }
svg { display: block; flex: none; overflow: visible; }
.sprite { position: absolute; }
.ico-bold { font-family: "Open Sans", sans-serif; font-weight: 700; }
.ico-serif { font-family: "Liberation Serif", serif; font-weight: 700; }
.ico-cond { font-family: "Liberation Serif", serif; font-weight: 700; }

.screens {
  display: grid;
  grid-template-columns: 2560fr 1824fr;
  align-items: start;
}

.screen {
  display: flex;
  flex-direction: column;
  aspect-ratio: 16 / 9;
  min-width: 0;
}

.primary { height: 100vh; aspect-ratio: auto; background: #fff; }

/* Browser frame */
.browser { background: #323639; color: #e8eaed; border-bottom: 1px solid #222528; }

.tabstrip {
  display: flex;
  align-items: stretch;
  height: 32px;
  padding-left: 8px;
  background: #202124;
}

.tab {
  display: flex;
  align-items: center;
  gap: 7px;
  width: 224px;
  padding: 0 10px;
  border-radius: 7px 7px 0 0;
  background: #323639;
}

.i16 { width: 16px; height: 16px; }
.tab-title { flex: 1; }
.tab-close svg { width: 10px; height: 10px; }
.new-tab { width: 39px; display: grid; place-items: center; }
.new-tab svg { width: 12px; height: 12px; }

.win-buttons { display: flex; margin-left: auto; height: 27px; }
.win-buttons button { width: 43px; display: grid; place-items: center; }
.win-buttons svg { width: 11px; height: 11px; }

.toolbar {
  display: flex;
  align-items: center;
  padding: 4px 5px 0;
}

.tool { width: 30px; height: 26px; display: grid; place-items: center; flex: none; }
.tool svg { width: 15px; height: 15px; }
.tool .avatar { width: 19px; height: 19px; }

.omnibox {
  display: flex;
  align-items: center;
  flex: 1;
  height: 26px;
  margin: 0 4px 0 6px;
  padding: 0 2px 0 10px;
  border-radius: 13px;
  background: #f1f3f4;
}

.info { width: 14px; height: 14px; margin-right: 8px; }
.url { flex: 1; font-size: 13px; color: #202124; }
.url span { color: #80868b; }
.extensions { display: flex; }
.divider { width: 1px; height: 16px; margin: 0 6px 0 5px; background: #5f6368; }

.bookmarks {
  display: grid;
  grid-template-columns: 63px 80px 29px 101px 145px 143px 114px 143px 144px 144px 71px 144px 100px 139px 142px 105px 144px 121px 150px 25px 1fr;
  align-items: center;
  height: 33px;
  padding: 0 12px 0 13px;
  white-space: nowrap;
}

.bookmarks a { display: flex; align-items: center; gap: 7px; }
.bookmarks svg { width: 15px; height: 15px; }
.bookmarks .more { font-size: 14px; line-height: 16px; }
.bookmarks .other { gap: 5px; padding-left: 9px; border-left: 1px solid #5f6368; }

/* Web page */
.page { flex: 1; min-height: 0; background: #fff; font-size: 18px; line-height: 28px; }

.navbar {
  display: flex;
  align-items: center;
  padding: 10px 19px;
  background: #353942;
}

.brand { width: 102px; font-size: 23px; color: #fff; }
.links { display: flex; gap: 18px; color: #9a9ca0; }
.links .active { color: #fff; }
.links .disabled { color: #686b71; }
.drop { display: flex; align-items: center; gap: 9px; }
.drop::after {
  content: "";
  border: 6px solid transparent;
  border-top-color: currentColor;
  border-bottom: 0;
}

.search { display: flex; gap: 9px; margin-left: auto; }
.search input {
  width: 239px;
  height: 45px;
  padding: 0 15px;
  border: 1px solid #ced4da;
  border-radius: 5px;
  background: #fff;
  font: inherit;
}
.search input::placeholder { color: #6c757d; opacity: 1; }
.search button {
  width: 85px;
  border: 1px solid #28a745;
  border-radius: 5px;
  color: #28a745;
}

.container { max-width: 1296px; margin: 0 auto; }

h2 {
  margin: 0 0 10px;
  font-size: 35px;
  line-height: 45px;
  font-weight: 600;
}

table { width: 100%; border-collapse: separate; border-spacing: 0; table-layout: fixed; }
.c-name { width: 237px; }
.c-mail { width: 248px; }
.c-id { width: 167px; }
.c-role { width: 156px; }
.c-mgr { width: 211px; }

th, td {
  padding: 14px;
  border-top: 1px solid #dee2e6;
  text-align: left;
  vertical-align: top;
}
th { background: #f2f2f2; font-weight: 700; }
thead td { border-top: 0; }
tbody tr:nth-child(even) td { background: #f2f2f2; }

.acts div { display: flex; gap: 6px; }
.btn {
  padding: 8px 15px 9px;
  border-radius: 5px;
  color: #fff;
}
.edit { background: #007bff; }
.delete { background: #dc3545; }

/* Taskbars */
.taskbar {
  display: flex;
  flex: none;
  height: 37px;
  background: #1a1a30;
  color: #fff;
}

.system { display: flex; }
.system button { width: 45px; display: grid; place-items: center; }
.taskbar button svg { width: 22px; height: 22px; }
.grip {
  width: 4px;
  margin: 11px 8px 11px 5px;
  border: 1px solid #4b4b5c;
  border-width: 0 1px;
}
.apps { display: grid; grid-template-columns: repeat(16, 1fr); width: 732px; margin-left: 3px; }
.secondary .apps { margin-left: 2px; }
.apps button { position: relative; display: grid; place-items: center; }
.apps .open::after,
.apps .current::after,
.apps .alert::after {
  content: "";
  position: absolute;
  right: 4px;
  bottom: 0;
  left: 4px;
  height: 2px;
  background: #76b9ed;
}
.apps .current::after, .apps .alert::after { right: 0; left: 0; }
.apps .alert::after { background: #ff7a00; }
.apps .current { background: #4b4b5f; box-shadow: inset -3px 0 #3d3d52; }
.apps .alert { background: #a5602f; box-shadow: inset -2px 0 #8f5127; }
.apps .hover { background: #32324a; }

.tray { display: flex; align-items: center; margin-left: auto; }
.primary .tray { border-right: 1px solid #777785; margin-right: 4px; }
.tray > button { width: 22px; height: 37px; display: grid; place-items: center; }
.taskbar .tray button svg { width: 16px; height: 16px; }
.tray .grip { height: 16px; margin: 0 9px 0 0; }
.tray label { color: #d8d8dc; }
.address {
  display: flex;
  width: 212px;
  height: 22px;
  margin: 0 18px 0 4px;
  background: #fff;
}
.address input { flex: 1; min-width: 0; border: 0; padding: 0 4px; background: #fff; }
.address button { width: 18px; display: grid; place-items: center; }
.taskbar .address button svg { width: 11px; height: 11px; }
.address .go { border-left: 1px solid #ccc; }
.tray .people { margin-right: 12px; }
.tray .lang { width: 38px; }
.clock { width: 60px; text-align: center; line-height: 16px; }
.primary .clock { width: 52px; }
.tray .notes { width: 50px; }
.taskbar .tray .notes svg { width: 24px; height: 24px; }

/* Desktop */
.desktop {
  display: grid;
  flex: 1;
  min-height: 0;
  grid-template-columns: repeat(24, minmax(0, 1fr));
  grid-template-rows: repeat(10, minmax(0, 1fr));
  padding: 0 23px 6px 0;
  background: #6b69d6;
  color: #fff;
  overflow: hidden;
}

figure {
  grid-column: var(--c);
  grid-row: var(--r);
  display: flex;
  flex-direction: column;
  align-items: center;
  gap: 4px;
  margin: 0;
  padding-top: 6px;
}
figure svg { width: 45px; height: 45px; }
figcaption { text-align: center; line-height: 14px; white-space: nowrap; }
```
